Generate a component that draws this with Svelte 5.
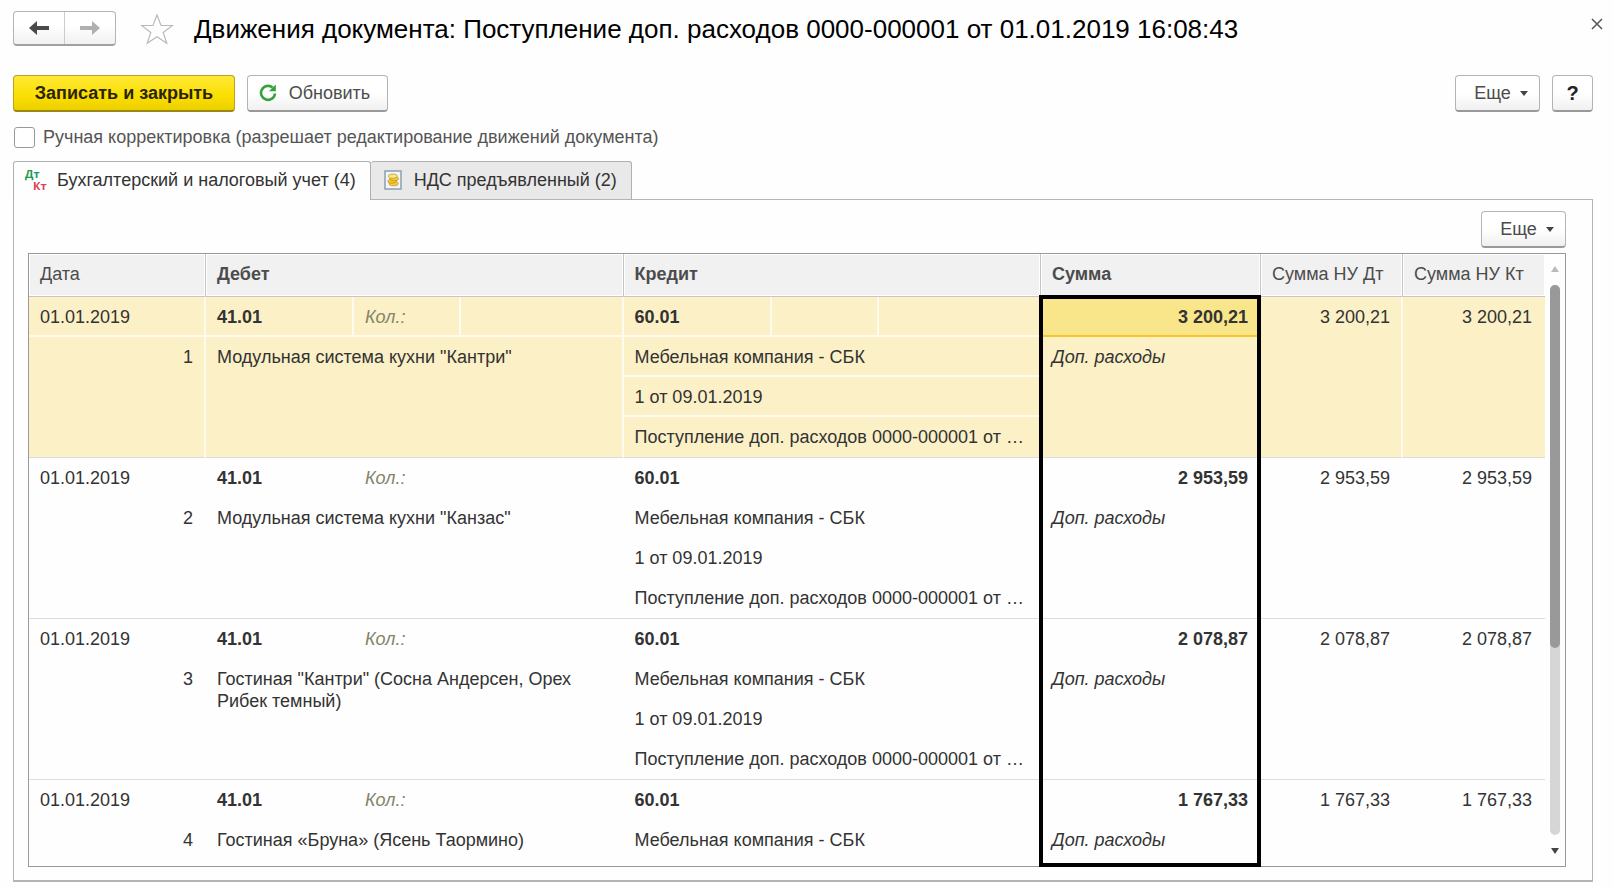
<script>
	let manualEdit = $state(false);
	let activeTab = $state('accounting');

	const product = 'Модульная система кухни';
	const supplier = 'Мебельная компания - СБК';
	const contract = '1 от 09.01.2019';
	const receipt = 'Поступление доп. расходов 0000-000001 от 01.01.2019 16:08:43';

	const entries = [
		{ date: '01.01.2019', item: `${product} "Кантри"`, sum: '3 200,21' },
		{ date: '01.01.2019', item: `${product} "Канзас"`, sum: '2 953,59' },
		{
			date: '01.01.2019',
			item: 'Гостиная "Кантри" (Сосна Андерсен, Орех Рибек темный)',
			sum: '2 078,87'
		},
		{ date: '01.01.2019', item: 'Гостиная «Бруна» (Ясень Таормино)', sum: '1 767,33' }
	];
</script>

{#snippet moreButton()}
	<button type="button" class="btn more">
		Еще
		<svg width="8" height="5" viewBox="0 0 8 5"><path d="M0 0h8L4 5z" fill="#444" /></svg>
	</button>
{/snippet}

<div class="window">
	<header>
		<div class="history">
			<button type="button" aria-label="Назад">
				<svg width="20" height="16" viewBox="0 0 20 16">
					<path d="M0 8 8 1v5h12v4H8v5z" fill="#4a4a4a" />
				</svg>
			</button>
			<button type="button" aria-label="Вперед">
				<svg width="20" height="16" viewBox="0 0 20 16">
					<path d="M20 8 12 1v5H0v4h12v5z" fill="#b0b0b0" />
				</svg>
			</button>
		</div>
		<button type="button" class="star" aria-label="В избранное">
			<svg width="34" height="32" viewBox="0 0 34 32">
				<path
					d="M17 2l4 10.5h11.5l-9.3 7 3.6 10.8L17 23.8l-9.8 6.5 3.6-10.8-9.3-7H13z"
					fill="#fff"
					stroke="#b9b9b9"
					stroke-width="1.2"
				/>
			</svg>
		</button>
		<h1>Движения документа: Поступление доп. расходов 0000-000001 от 01.01.2019 16:08:43</h1>
		<button type="button" class="close" aria-label="Закрыть">
			<svg width="12" height="12" viewBox="0 0 12 12">
				<path d="M1 1l10 10M11 1L1 11" stroke="#555" stroke-width="1.5" />
			</svg>
		</button>
	</header>

	<div class="toolbar">
		<button type="button" class="btn primary">Записать и закрыть</button>
		<button type="button" class="btn refresh">
			<svg width="18" height="18" viewBox="0 0 18 18">
				<path
					d="M13.6 3.6A7 7 0 1 0 16 9.5"
					fill="none"
					stroke="#35a03c"
					stroke-width="2.6"
				/>
				<path d="M16.8 0.4v6.8H10z" fill="#35a03c" />
			</svg>
			Обновить
		</button>
		<span class="spacer"></span>
		{@render moreButton()}
		<button type="button" class="btn help">?</button>
	</div>

	<label class="manual">
		<input type="checkbox" bind:checked={manualEdit} />
		Ручная корректировка (разрешает редактирование движений документа)
	</label>

	<div class="tabs" role="tablist">
		<button
			type="button"
			role="tab"
			aria-selected={activeTab === 'accounting'}
			class:active={activeTab === 'accounting'}
			onclick={() => (activeTab = 'accounting')}
		>
			<svg class="dtkt" width="24" height="24" viewBox="0 0 24 24">
				<text x="0" y="10" fill="#1d9a55">Дт</text>
				<text x="8" y="22" fill="#dc4055">Кт</text>
			</svg>
			Бухгалтерский и налоговый учет (4)
		</button>
		<button
			type="button"
			role="tab"
			aria-selected={activeTab === 'vat'}
			class:active={activeTab === 'vat'}
			onclick={() => (activeTab = 'vat')}
		>
			<svg class="coins" width="18" height="20" viewBox="0 0 18 20">
				<rect x="1" y="1" width="16" height="18" fill="#f2f6f9" stroke="#8a9fb0" stroke-width="1.5" />
				<g fill="#f6cc30" stroke="#b98a1c" stroke-width="0.7">
					<ellipse cx="9.6" cy="13.6" rx="4.6" ry="2.2" />
					<ellipse cx="8" cy="11.2" rx="4.2" ry="2" />
					<ellipse cx="10.2" cy="8.8" rx="4.4" ry="2" />
					<ellipse cx="8.8" cy="6.2" rx="4.4" ry="2.1" fill="#fbe680" />
				</g>
			</svg>
			НДС предъявленный (2)
		</button>
	</div>

	<main>
		<div class="list-bar">
			{@render moreButton()}
		</div>

		<div class="list">
			<div class="rows">
				<table>
					<colgroup>
						<col class="c-date" />
						<col class="c-account" />
						<col class="c-qty" />
						<col />
						<col class="c-account" />
						<col class="c-qty" />
						<col />
						<col class="c-sum" />
						<col class="c-tax" />
						<col class="c-tax" />
					</colgroup>
					<thead>
						<tr>
							<th>Дата</th>
							<th colspan="3" class="bold">Дебет</th>
							<th colspan="3" class="bold">Кредит</th>
							<th class="bold">Сумма</th>
							<th>Сумма НУ Дт</th>
							<th class="last">Сумма НУ Кт</th>
						</tr>
					</thead>
					{#each entries as entry, i}
						<tbody class:selected={i === 0}>
							<tr>
								<td>{entry.date}</td>
								<td class="bold">41.01</td>
								<td class="qty">Кол.:</td>
								<td></td>
								<td class="bold">60.01</td>
								<td></td>
								<td></td>
								<td class="bold num current">{entry.sum}</td>
								<td class="num end" rowspan="4">{entry.sum}</td>
								<td class="num end last" rowspan="4">{entry.sum}</td>
							</tr>
							<tr>
								<td class="num end" rowspan="3">{i + 1}</td>
								<td class="end" colspan="3" rowspan="3">{entry.item}</td>
								<td colspan="3">{supplier}</td>
								<td class="note end" rowspan="3">Доп. расходы</td>
							</tr>
							<tr>
								<td colspan="3">{contract}</td>
							</tr>
							<tr>
								<td class="cut end" colspan="3">{receipt}</td>
							</tr>
						</tbody>
					{/each}
				</table>
			</div>

			<div class="scrollbar">
				<svg width="8" height="6" viewBox="0 0 8 6"><path d="M0 6h8L4 0z" fill="#bbb" /></svg>
				<div class="track"><div class="thumb"></div></div>
				<svg width="8" height="6" viewBox="0 0 8 6"><path d="M0 0h8L4 6z" fill="#444" /></svg>
			</div>

			<div class="highlight"></div>
		</div>
	</main>
</div>

<style>
	:global(body) {
		background-color: #fefefe;
	}

	.window {
		box-sizing: border-box;
		height: 100vh;
		min-height: 480px;
		padding: 11px 20px 8px 13px;
		display: flex;
		flex-direction: column;
		font-family: 'Liberation Sans', Arial, sans-serif;
		font-size: 18px;
		line-height: 22px;
		color: #333;
	}

	button {
		font: inherit;
		color: inherit;
		padding: 0;
		cursor: pointer;
	}

	svg {
		display: block;
		flex: none;
	}

	header {
		display: flex;
		align-items: center;
		height: 35px;
		margin-right: -17px;
	}

	.history {
		box-sizing: border-box;
		display: flex;
		width: 103px;
		height: 35px;
		border: 1px solid #b4b4b4;
		border-bottom: 2px solid #a0a0a0;
		border-radius: 4px;
		background: linear-gradient(#fff 40%, #f1f1f1);
	}

	.history button {
		flex: 1;
		display: flex;
		align-items: center;
		justify-content: center;
		border: none;
		background: none;
	}

	.history button + button {
		border-left: 1px solid #ccc;
	}

	.star {
		margin-left: 24px;
		border: none;
		background: none;
	}

	h1 {
		flex: 1;
		margin: 0 0 0 20px;
		font-size: 26px;
		line-height: 32px;
		font-weight: normal;
		white-space: nowrap;
		color: #000;
	}

	.close {
		align-self: flex-start;
		padding: 7px;
		border: none;
		background: none;
	}

	.toolbar {
		display: flex;
		gap: 12px;
		margin-top: 29px;
	}

	.spacer {
		flex: 1;
	}

	.btn {
		box-sizing: border-box;
		height: 37px;
		display: flex;
		align-items: center;
		justify-content: center;
		border: 1px solid #b4b4b4;
		border-bottom: 2px solid #999;
		border-radius: 4px;
		background: linear-gradient(#fff 50%, #f0f0f0);
		color: #4c4c4c;
	}

	.btn:hover {
		background: #f4f4f4;
	}

	.primary {
		width: 222px;
		font-weight: bold;
		color: #2a2400;
		border-color: #b8a320;
		border-bottom-color: #9a8710;
		background: linear-gradient(#ffe936, #fadf00 60%, #ecce00);
	}

	.primary:hover {
		background: #fadf00;
	}

	.refresh {
		width: 141px;
		padding-right: 6px;
		gap: 12px;
	}

	.more {
		width: 85px;
		padding-left: 7px;
		gap: 9px;
	}

	.help {
		width: 41px;
		font-size: 20px;
		font-weight: bold;
		color: #222;
	}

	.manual {
		display: flex;
		align-items: center;
		gap: 8px;
		margin-top: 14px;
		color: #555;
	}

	.manual input {
		appearance: none;
		box-sizing: border-box;
		width: 21px;
		height: 21px;
		margin: 0 0 0 1px;
		border: 1px solid #999;
		border-radius: 3px;
		background-color: #fff;
	}

	.manual input:checked {
		background-color: #fadf00;
	}

	.tabs {
		display: flex;
		margin-top: 13px;
	}

	.tabs button {
		box-sizing: border-box;
		height: 38px;
		display: flex;
		align-items: center;
		gap: 10px;
		padding: 0 14px 2px 13px;
		border: 1px solid #b0b0b0;
		border-left-width: 0;
		border-bottom: none;
		border-radius: 3px 3px 0 0;
		background-color: #e9e9e9;
	}

	.tabs button:first-child {
		border-left-width: 1px;
		padding: 0 14px 2px 11px;
		gap: 8px;
	}

	.tabs .active {
		position: relative;
		z-index: 1;
		height: 39px;
		margin-bottom: -1px;
		background-color: #fefefe;
	}

	.dtkt {
		overflow: visible;
		font-family: 'Open Sans', sans-serif;
		font-size: 11px;
		font-weight: bold;
	}

	.coins {
		margin-right: 2px;
	}

	main {
		flex: 1;
		min-height: 0;
		display: flex;
		flex-direction: column;
		padding: 11px 26px 13px 14px;
		border: 1px solid #b4b4b4;
		border-bottom-width: 2px;
	}

	.list-bar {
		display: flex;
		justify-content: flex-end;
	}

	.list {
		position: relative;
		flex: 1;
		min-height: 0;
		display: flex;
		margin-top: 5px;
		border: 1px solid #999;
	}

	.rows {
		flex: 1;
		min-width: 0;
		overflow-y: auto;
		scrollbar-width: none;
	}

	table {
		width: 100%;
		table-layout: fixed;
		border-collapse: separate;
		border-spacing: 0;
	}

	.c-date {
		width: 177px;
	}

	.c-account {
		width: 148px;
	}

	.c-qty {
		width: 107px;
	}

	.c-sum {
		width: 220px;
	}

	.c-tax {
		width: 142px;
	}

	th {
		position: sticky;
		top: 0;
		box-sizing: border-box;
		height: 43px;
		padding: 0 10px 2px 11px;
		text-align: left;
		font-weight: normal;
		white-space: nowrap;
		color: #4c4c4c;
		background-color: #f1f1f1;
		border-right: 1px solid #c6c6c6;
		border-bottom: 1px solid #c6c6c6;
		box-shadow: inset 0 0 0 1px #fff;
	}

	td {
		box-sizing: border-box;
		height: 40px;
		padding: 9px 13px 7px 11px;
		vertical-align: top;
		border-bottom: 2px solid transparent;
	}

	.bold {
		font-weight: bold;
	}

	.num {
		text-align: right;
	}

	td.end {
		border-bottom: 1px solid #dcdcdc;
	}

	td.cut {
		height: 41px;
		overflow: hidden;
		text-overflow: ellipsis;
		white-space: nowrap;
	}

	.qty {
		font-style: italic;
		color: #85856a;
	}

	.note {
		font-style: italic;
	}

	.selected td {
		padding-right: 11px;
		background-color: #fcf0c6;
		border-right: 2px solid #fffaf0;
		border-bottom-color: #fffaf0;
	}

	.selected td.end {
		border-bottom-color: #dcdcdc;
	}

	.selected td.current {
		background-color: #fae68a;
		border-bottom-color: #f8c62c;
	}

	th.last,
	.selected td.last {
		border-right-width: 0;
	}

	.selected td.last {
		padding-right: 13px;
	}

	.scrollbar {
		width: 20px;
		display: flex;
		flex-direction: column;
		align-items: center;
		gap: 13px;
		padding: 12px 0;
		box-sizing: border-box;
	}

	.track {
		flex: 1;
		width: 10px;
		border-radius: 5px;
		background-color: #d6d6d6;
	}

	.thumb {
		height: 66%;
		border-radius: 5px;
		background-color: #999;
	}

	/* frame round the amount column, from the header down */
	.highlight {
		position: absolute;
		box-sizing: border-box;
		top: 41px;
		right: 304px;
		bottom: -1px;
		width: 222px;
		border: 4px solid #000;
		pointer-events: none;
	}
</style>
